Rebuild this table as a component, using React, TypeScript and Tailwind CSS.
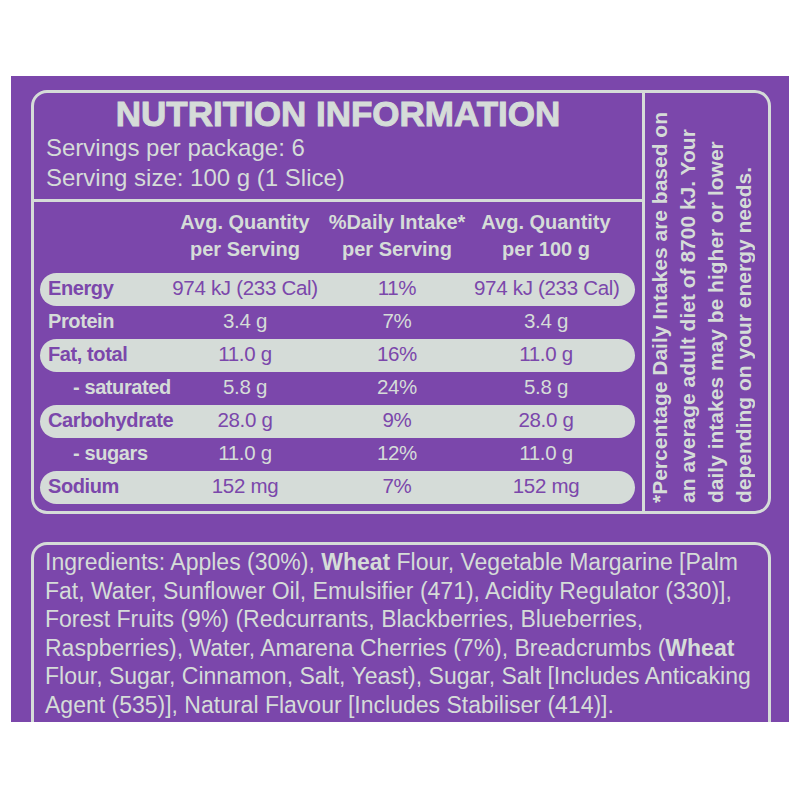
import React from 'react';

const ROWS = [
    { label: 'Energy', a: '974 kJ (233 Cal)', p: '11%', b: '974 kJ (233 Cal)', pill: true },
    { label: 'Protein', a: '3.4 g', p: '7%', b: '3.4 g' },
    { label: 'Fat, total', a: '11.0 g', p: '16%', b: '11.0 g', pill: true },
    { label: '- saturated', a: '5.8 g', p: '24%', b: '5.8 g', sub: true },
    { label: 'Carbohydrate', a: '28.0 g', p: '9%', b: '28.0 g', pill: true },
    { label: '- sugars', a: '11.0 g', p: '12%', b: '11.0 g', sub: true },
    { label: 'Sodium', a: '152 mg', p: '7%', b: '152 mg', pill: true },
];

const App: React.FC = () => {
    return (
        <div className="min-h-[800px] bg-white pt-[76px] px-[11px] font-['Liberation_Sans',Arial,sans-serif]">
            <div className="h-[646px] overflow-hidden bg-[#7b47ab] pl-[20px] pr-[18px] pt-[14px] flex flex-col text-[#d5dcd8]">
                {/* --- NUTRITION PANEL --- */}
                <div className="h-[424px] border-[3px] border-[#d5dcd8] rounded-[16px] grid grid-cols-[611px_1fr]">
                    <div className="border-r-[3px] border-[#d5dcd8] flex flex-col">
                        <div className="pt-[2px] pb-[6px] pl-[12px]">
                            <h1 className="text-center pr-[12px] text-[35px] leading-[38px] font-bold [-webkit-text-stroke:1px_#d5dcd8]">
                                NUTRITION INFORMATION
                            </h1>
                            <p className="text-[24px] leading-[30px]">Servings per package: 6</p>
                            <p className="text-[24px] leading-[30px]">Serving size: 100 g (1 Slice)</p>
                        </div>
                        <div className="border-t-[3px] border-[#d5dcd8] pt-[7px] pl-[6px] pr-[7px]">
                            <div className="grid grid-cols-[122px_150px_154px_144px] pl-[8px] text-[20px] leading-[27px] font-bold text-center">
                                <div />
                                <div>Avg. Quantity<br />per Serving</div>
                                <div>%Daily Intake*<br />per Serving</div>
                                <div>Avg. Quantity<br />per 100 g</div>
                            </div>
                            <div className="mt-[10px]">
                                {ROWS.map((r) => (
                                    <div
                                        key={r.label}
                                        className={`h-[33px] grid grid-cols-[122px_150px_154px_144px] items-center pl-[8px] pb-[3px] text-[20.5px] leading-[24px] whitespace-nowrap rounded-full ${r.pill ? 'bg-[#d5dcd8] text-[#7b47ab]' : ''}`}
                                    >
                                        <div className={`font-bold text-[20px] tracking-[-0.4px] ${r.sub ? 'pl-[25px]' : ''}`}>{r.label}</div>
                                        <div className="text-center tracking-[-0.3px]">{r.a}</div>
                                        <div className="text-center tracking-[-0.3px]">{r.p}</div>
                                        <div className="text-center tracking-[-0.3px]">{r.b}</div>
                                    </div>
                                ))}
                            </div>
                        </div>
                    </div>
                    <div className="pl-[1px] pt-[8px]">
                        <p className="h-[402px] [writing-mode:vertical-rl] rotate-180 text-start text-[21px] leading-[28px] font-bold whitespace-nowrap">
                            *Percentage Daily Intakes are based on<br />
                            an average adult diet of 8700 kJ. Your<br />
                            daily intakes may be higher or lower<br />
                            depending on your energy needs.
                        </p>
                    </div>
                </div>

                {/* --- INGREDIENTS --- */}
                <div className="mt-[28px] flex-1 border-t-[3px] border-x-[3px] border-[#d5dcd8] rounded-t-[16px] pt-[3px] pl-[11px]">
                    <p className="text-[23px] leading-[28.5px] whitespace-nowrap">
                        Ingredients: Apples (30%), <b>Wheat</b> Flour, Vegetable Margarine [Palm<br />
                        Fat, Water, Sunflower Oil, Emulsifier (471), Acidity Regulator (330)],<br />
                        Forest Fruits (9%) (Redcurrants, Blackberries, Blueberries,<br />
                        Raspberries), Water, Amarena Cherries (7%), Breadcrumbs (<b>Wheat</b><br />
                        Flour, Sugar, Cinnamon, Salt, Yeast), Sugar, Salt [Includes Anticaking<br />
                        Agent (535)], Natural Flavour [Includes Stabiliser (414)].
                    </p>
                </div>
            </div>
        </div>
    );
};

export default App;
